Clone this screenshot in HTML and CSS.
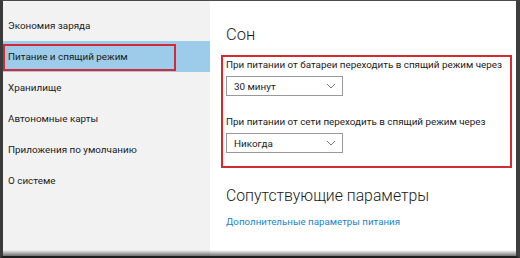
FILE: index.html
```html
<!DOCTYPE html>
<html lang="ru">
<head>
<meta charset="utf-8">
<link rel="stylesheet" href="styles.css">
</head>
<body>
<div class="window">
  <nav class="sidebar">
    <div class="nav-item">Экономия заряда</div>
    <div class="nav-item selected"><span class="mark"></span>Питание и спящий режим</div>
    <div class="nav-item">Хранилище</div>
    <div class="nav-item">Автономные карты</div>
    <div class="nav-item">Приложения по умолчанию</div>
    <div class="nav-item">О системе</div>
  </nav>
  <main class="content">
    <h1 class="title">Сон</h1>
    <section class="group">
      <div class="label">При питании от батареи переходить в спящий режим через</div>
      <div class="select"><span>30 минут</span><svg class="chev" width="10" height="6" viewBox="0 0 10 6"><path d="M1 1 L5 5 L9 1" fill="none" stroke="#777" stroke-width="1"/></svg></div>
      <div class="label second">При питании от сети переходить в спящий режим через</div>
      <div class="select"><span>Никогда</span><svg class="chev" width="10" height="6" viewBox="0 0 10 6"><path d="M1 1 L5 5 L9 1" fill="none" stroke="#777" stroke-width="1"/></svg></div>
    </section>
    <h2 class="subtitle">Сопутствующие параметры</h2>
    <a class="link">Дополнительные параметры питания</a>
  </main>
</div>
</body>
</html>
```
FILE: styles.css
```css
html, body {
  margin: 0;
  padding: 0;
  background: #222;
}
.window {
  width: 520px;
  height: 258px;
  box-sizing: border-box;
  display: flex;
  border-left: 3px solid #3a3a3a;
  border-top: 1px solid #4a4a4a;
  border-right: 4px solid #3e3e3e;
  border-bottom: 2px solid #1e1e1e;
  font-family: Roboto, "Noto Sans", sans-serif;
  color: #1a1a1a;
  position: relative;
  overflow: hidden;
}
.window::after {
  content: "";
  position: absolute;
  left: 0;
  right: 0;
  bottom: 0;
  height: 6px;
  background: linear-gradient(to bottom, rgba(0,0,0,0), rgba(0,0,0,0.55));
  pointer-events: none;
}
.sidebar {
  width: 207px;
  background: #f2f2f2;
  padding-top: 9px;
  box-sizing: border-box;
  flex-shrink: 0;
}
.nav-item {
  height: 31px;
  line-height: 31px;
  padding-left: 5px;
  font-size: 9.9px;
  position: relative;
  white-space: nowrap;
}
.nav-item.selected {
  background: #9dcbea;
}
.mark {
  position: absolute;
  left: 0;
  top: 3px;
  width: 173px;
  height: 27px;
  border: 2px solid #d42a36;
  box-sizing: border-box;
}
.content {
  flex: 1;
  min-width: 0;
  background: #fff;
  padding: 22px 4px 0 11px;
  box-sizing: border-box;
}
.title {
  margin: 0 0 0 5px;
  font-weight: 300;
  font-size: 16.5px;
  line-height: 24px;
}
.group {
  margin-top: 8px;
  border: 2px solid #d42a36;
  padding: 0 0 13px 3px;
}
.label {
  font-size: 9.85px;
  line-height: 16px;
  white-space: nowrap;
}
.label.second {
  margin-top: 18px;
}
.select {
  margin-top: 3px;
  width: 117px;
  height: 20px;
  box-sizing: border-box;
  border: 1px solid #999;
  display: flex;
  align-items: center;
  justify-content: space-between;
  padding: 0 6px 0 7px;
  font-size: 9.9px;
}
.chev {
  display: block;
}
.subtitle {
  margin: 16px 0 0 5px;
  font-weight: 300;
  font-size: 15.8px;
  line-height: 24px;
}
.link {
  display: block;
  margin: 6px 0 0 5px;
  font-size: 9.75px;
  line-height: 16px;
  color: #1b86c2;
}
```
